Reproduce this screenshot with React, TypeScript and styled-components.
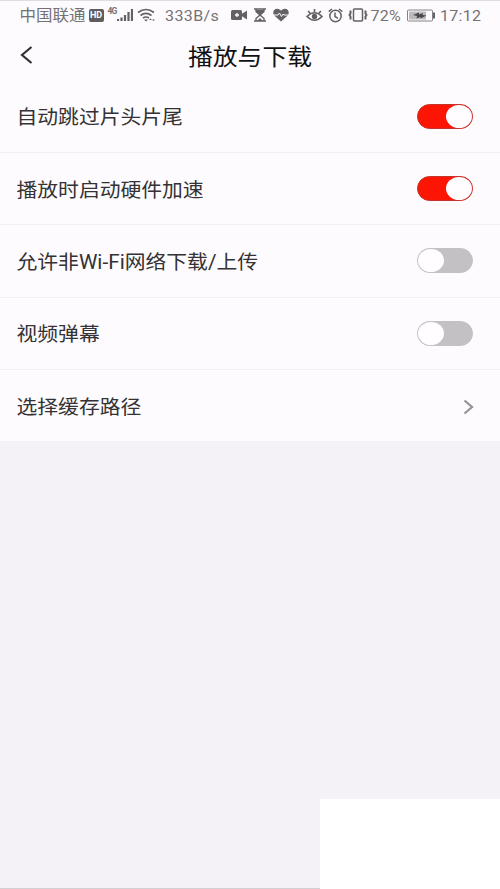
import React, { useState } from "react";
import styled, { createGlobalStyle } from "styled-components";

const GlobalStyle = createGlobalStyle`
  * { box-sizing: border-box; }
  body {
    margin: 0;
    background: #f4f2f6;
    font-family: Roboto, "Noto Sans CJK SC", sans-serif;
  }
`;

const Screen = styled.div`
  display: flex;
  flex-direction: column;
  width: 500px;
  height: 889px;
  overflow: hidden;
  background: #f4f2f6;
`;

const StatusBar = styled.div`
  display: flex;
  align-items: center;
  height: 30px;
  flex: none;
  padding: 0 0 1px 19.5px;
  border-top: 1px solid #dfdde0;
  background: #fdfbfd;
  color: #747274;
`;

const StatusText = styled.span<{ $width: number; $gap?: number; $size?: number; $spacing?: number }>`
  flex: none;
  width: ${(p) => p.$width}px;
  margin-left: ${(p) => p.$gap ?? 0}px;
  padding-top: 2px;
  font-size: ${(p) => p.$size ?? 16}px;
  letter-spacing: ${(p) => p.$spacing ?? 0}px;
  line-height: 28px;
  white-space: nowrap;
  transform: scaleY(0.94);
`;

const NetworkLabel = styled.span`
  flex: none;
  width: 9px;
  height: 17px;
  margin-left: 4px;
  font-size: 8.5px;
  line-height: 8px;
  font-weight: 700;
  letter-spacing: -0.9px;
`;

const HdBadge = styled.span`
  display: flex;
  align-items: center;
  justify-content: center;
  flex: none;
  width: 15px;
  height: 13px;
  margin-left: 3px;
  border-radius: 2px;
  background: #5e5c5e;
  color: #fdfbfd;
  font-size: 9px;
  font-weight: 700;
  line-height: 13px;
`;

const StatusIcon = styled.svg<{ $gap: number }>`
  flex: none;
  display: block;
  margin-left: ${(p) => p.$gap}px;
  color: #636163;
  fill: none;
  stroke: currentColor;
`;

const Header = styled.header`
  display: grid;
  grid-template-columns: 80px 1fr 80px;
  align-items: center;
  flex: none;
  height: 50.5px;
  background: #fdfbfd;
`;

const BackButton = styled.button`
  display: flex;
  align-items: center;
  height: 49px;
  padding: 0 0 0 19px;
  border: 0;
  background: none;
  color: #333133;
`;

const Title = styled.h1`
  margin: 0;
  padding-top: 5px;
  color: #111;
  font-size: 24.8px;
  line-height: 36px;
  font-weight: 400;
  text-align: center;
  white-space: nowrap;
  transform: scaleY(0.93);
`;

const SettingsList = styled.main`
  flex: none;
  background: #fdfbfd;
`;

const Row = styled.div`
  display: flex;
  align-items: center;
  justify-content: space-between;
  height: 72.4px;
  padding: 0 27px 0 16.5px;
  border-bottom: 1px solid #f1eff1;
`;

const Label = styled.span`
  padding-top: 4px;
  color: #343234;
  font-size: 20.8px;
  line-height: 30px;
  white-space: nowrap;
  transform: scaleY(0.93);
`;

const Track = styled.button<{ $on: boolean }>`
  display: flex;
  align-items: center;
  justify-content: ${(p) => (p.$on ? "flex-end" : "flex-start")};
  width: 56px;
  height: 25px;
  padding: 0;
  border: 1px solid ${(p) => (p.$on ? "#c4342c" : "#c3c1c4")};
  border-radius: 13px;
  background: ${(p) => (p.$on ? "#fc1404" : "#c3c1c4")};
`;

const Knob = styled.span`
  width: 26px;
  height: 23px;
  border-radius: 50%;
  background: #fffdff;
`;

const Chevron = styled.svg`
  display: block;
  margin: 2px -1px 0 0;
  fill: none;
  stroke: #979597;
  stroke-width: 2.3;
`;

const Footer = styled.footer`
  display: grid;
  grid-template-columns: 320px 180px;
  height: 90px;
  margin-top: auto;
`;

const FooterEdge = styled.div`
  border-bottom: 1px solid #d2d0d3;
`;

const BlankPanel = styled.div`
  background: #fff;
`;

function Toggle({ initial, label }: { initial: boolean; label: string }) {
  const [on, setOn] = useState(initial);
  return (
    <Track $on={on} role="switch" aria-checked={on} aria-label={label} onClick={() => setOn(!on)}>
      <Knob />
    </Track>
  );
}

function SignalIcon() {
  return (
    <StatusIcon $gap={0} width="16" height="14" viewBox="0 0 16 14" strokeWidth="2.2">
      <path d="M1 13v-2M4.500 13V9.500M8 13V7M11.500 13V4M15 13V1" />
    </StatusIcon>
  );
}

function WifiIcon() {
  return (
    <StatusIcon $gap={4} width="19" height="14" viewBox="0 0 19 14" strokeWidth="1.6">
      <path d="M1 4.500Q9 -1.500 17 4.500M3.500 7.500Q9 3.300 14.500 7.500M6 10Q9 8 12 10" />
      <path d="M7 11.500h4l-2 2zM12 12l1.500-1.500L15 12zM15 11.500h3l-1.500 1.500z" fill="currentColor" stroke="none" />
    </StatusIcon>
  );
}

function CameraIcon() {
  return (
    <StatusIcon $gap={11} width="16" height="12" viewBox="0 0 16 12">
      <rect x="0" y="1" width="11" height="10" rx="1.500" fill="currentColor" stroke="none" />
      <path d="M9 6l7-4.500v9z" fill="currentColor" stroke="none" />
      <path d="M4 6h4M6 4v4" stroke="#fdfbfd" strokeWidth="1.300" />
    </StatusIcon>
  );
}

function HourglassIcon() {
  return (
    <StatusIcon $gap={7} width="12" height="14" viewBox="0 0 12 14" strokeWidth="1.400">
      <path d="M0 1h12M0 13h12M2 1v2.500L6 7l4-3.500V1M2 13v-2.500L6 7l4 3.500V13" />
      <path d="M2 2h8v2L6 7 2 4zM3 13l3-3 3 3z" fill="currentColor" stroke="none" />
    </StatusIcon>
  );
}

function HeartIcon() {
  return (
    <StatusIcon $gap={7} width="16" height="14" viewBox="0 0 16 14">
      <path d="M8 13.500L1.300 7.400C-.8 5 .3.700 4.200.700 6.200.700 7.300 1.700 8 2.700 8.700 1.700 9.800.700 11.800.700c3.900 0 5 4.300 2.900 6.700z" fill="currentColor" stroke="none" />
      <path d="M1 7h4l1.500-2 2 3.500 1.600-2.500L11 7h4" stroke="#fdfbfd" strokeWidth="1" />
    </StatusIcon>
  );
}

function EyeIcon() {
  return (
    <StatusIcon $gap={17} width="17" height="15" viewBox="0 0 17 15" strokeWidth="1.600">
      <path d="M1 8.500Q8.500 1 16 8.500 8.500 16 1 8.500zM8.500 1v4M2.200 3l2 2.500M14.800 3l-2 2.500" />
      <circle cx="8.500" cy="8.500" r="2.700" fill="currentColor" stroke="none" />
    </StatusIcon>
  );
}

function AlarmIcon() {
  return (
    <StatusIcon $gap={5} width="15" height="15" viewBox="0 0 15 15" strokeWidth="1.500">
      <circle cx="7.500" cy="8" r="5.700" />
      <path d="M.7 3.700L4 1M14.300 3.700L11 1M7 4.500v4l3 1.800" />
    </StatusIcon>
  );
}

function VibrateIcon() {
  return (
    <StatusIcon $gap={5} width="20" height="14" viewBox="0 0 20 14" strokeWidth="1.500">
      <rect x="5.500" y="1" width="9" height="12" rx="1" />
      <path d="M2.500 2.500v3l-1 1.500 1 1.500v3M17.500 2.500v3l1 1.500-1 1.500v3" strokeWidth="2" />
    </StatusIcon>
  );
}

function BatteryIcon() {
  return (
    <StatusIcon $gap={4} width="28" height="13" viewBox="0 0 28 13">
      <rect x=".5" y="1" width="25" height="11" rx="1" stroke="#858385" />
      <path d="M2 2.500h17v8H2z" fill="#bcbabd" stroke="none" />
      <path d="M6 6l6-2.500v2l4-1.500-.5 2 4 .5-6 3V8l-4 1.500.5-2.500z" fill="#4a484a" stroke="none" />
      <path d="M27 3.500v6" strokeWidth="2" />
    </StatusIcon>
  );
}

const switches = [
  { label: "自动跳过片头片尾", on: true },
  { label: "播放时启动硬件加速", on: true },
  { label: "允许非Wi-Fi网络下载/上传", on: false },
  { label: "视频弹幕", on: false },
];

export default function App() {
  return (
    <>
      <GlobalStyle />
      <Screen>
        <StatusBar>
          <StatusText $width={66} $size={16.5}>中国联通</StatusText>
          <HdBadge>HD</HdBadge>
          <NetworkLabel>4G</NetworkLabel>
          <SignalIcon />
          <WifiIcon />
          <StatusText $width={55} $gap={9.5} $spacing={0.4}>333B/s</StatusText>
          <CameraIcon />
          <HourglassIcon />
          <HeartIcon />
          <EyeIcon />
          <AlarmIcon />
          <VibrateIcon />
          <StatusText $width={32} $gap={2.5} $spacing={0.2}>72%</StatusText>
          <BatteryIcon />
          <StatusText $width={43} $gap={5.5} $spacing={0.3}>17:12</StatusText>
        </StatusBar>
        <Header>
          <BackButton aria-label="返回">
            <svg width="14" height="20" viewBox="0 0 14 20" fill="none" stroke="currentColor" strokeWidth="2.200">
              <path d="M12.500 2L3 10l9.500 8" />
            </svg>
          </BackButton>
          <Title>播放与下载</Title>
        </Header>
        <SettingsList>
          {switches.map((item) => (
            <Row key={item.label}>
              <Label>{item.label}</Label>
              <Toggle initial={item.on} label={item.label} />
            </Row>
          ))}
          <Row>
            <Label>选择缓存路径</Label>
            <Chevron width="11" height="16" viewBox="0 0 11 16">
              <path d="M1.500 1.500L9 8l-7.500 6.500" />
            </Chevron>
          </Row>
        </SettingsList>
        <Footer>
          <FooterEdge />
          <BlankPanel />
        </Footer>
      </Screen>
    </>
  );
}
